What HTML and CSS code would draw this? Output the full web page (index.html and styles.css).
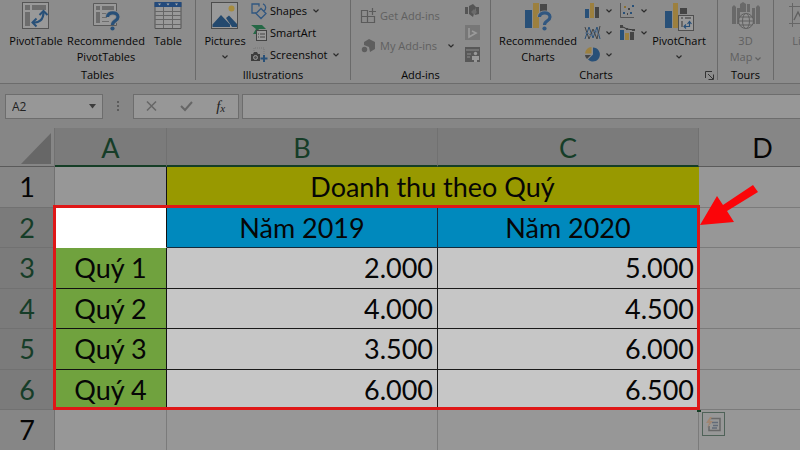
FILE: index.html
```html
<!DOCTYPE html>
<html lang="vi">
<head>
<meta charset="utf-8">
<title>Doanh thu theo Quý</title>
<link rel="stylesheet" href="styles.css">
</head>
<body>
<svg class="defs" aria-hidden="true">
  <symbol id="chev" viewBox="0 0 6 4"><path d="M.5.5 3 3 5.5.5" fill="none" stroke="currentColor" stroke-width="1.2"/></symbol>
</svg>
<header class="ribbon">
  <section class="group tables">
    <div class="tools">
      <button class="big"><svg width="28" height="27" viewBox="0 0 28 27"><rect x=".5" y=".5" width="26" height="26" fill="#999" stroke="#555"/><path d="M3 3h5v5H3zM10 3h14v5H10zM3 10h5v14H3z" fill="#6d6d6d"/><path d="M11 20.500C17 21 21.500 18 21.500 10" fill="none" stroke="#285078" stroke-width="2.200"/><path d="M17.500 13l4-4 4 4M14.500 16.500l-4 4 4 4" fill="none" stroke="#285078" stroke-width="2"/></svg><span>PivotTable</span></button>
      <button class="big"><svg width="28" height="27" viewBox="0 0 28 27"><path d="M1.500 1.500h23v22h-23z" fill="#999" stroke="#5a5a5a"/><path d="M4 4h4v4H4zM10 4h12v4H10zM4 10h4v11H4zM10 11h5v1h-5zM10 15h5v1h-5zM10 19h7v1h-7z" fill="#6d6d6d"/><path d="M15.500 15c0-5.500 10.500-5.500 10.500 0 0 4-5.500 3.500-5.500 8" fill="none" stroke="#8d8d8d" stroke-width="5"/><path d="M15.500 15c0-5.500 10.500-5.500 10.500 0 0 4-5.500 3.500-5.500 8" fill="none" stroke="#285078" stroke-width="3.200"/><circle cx="20.500" cy="26.500" r="2.100" fill="#285078"/></svg><span>Recommended<br>PivotTables</span></button>
      <button class="big"><svg width="28" height="27" viewBox="0 0 28 27"><path d="M1 .5h26v26H1z" fill="#999" stroke="#555"/><path d="M.5 0h27v5H.5z" fill="#234a7c"/><path d="M4 1.500h3L5.500 3.500zM12.500 1.500h3L14 3.500zM21 1.500h3l-1.500 2z" fill="#aaa"/><path d="M9.500 5v21M18.500 5v21M1 9.500h26M1 13.500h26M1 17.500h26M1 22.500h26" stroke="#666" fill="none"/></svg><span>Table</span></button>
    </div>
    <h2>Tables</h2>
  </section>
  <section class="group illus">
    <div class="tools">
      <button class="big"><svg width="28" height="27" viewBox="0 0 28 27"><rect x=".5" y=".5" width="26" height="26" fill="#999" stroke="#4c4c4c"/><circle cx="20.500" cy="6.500" r="3" fill="#a78c3c"/><path d="M1.500 22.500 10 13l9 9.500V25H1.500zM15 16l3-2.500 8 8.500v3h-5z" fill="#24496e"/></svg><span>Pictures</span><svg class="chev"><use href="#chev"/></svg></button>
      <div class="stack">
        <button class="row"><svg width="16" height="16" viewBox="0 0 16 16"><path d="M8 3.500V1h-7v9h4M12 .8a4 4 0 0 1 1 7M5 10.500l5-5 5 5-5 5z" fill="none" stroke="#315780" stroke-width="1.300"/></svg>Shapes<svg class="chev"><use href="#chev"/></svg></button>
        <button class="row"><svg width="16" height="16" viewBox="0 0 16 16"><path d="M0 0h11l4 4H8L5 9H2l3-5z" fill="#256846"/><rect x="5.500" y="5.500" width="10" height="10" fill="#999" stroke="#444"/><path d="M7 9h1M9 9h5M7 12h1M9 12h5" stroke="#444"/></svg>SmartArt</button>
        <button class="row"><svg width="16" height="16" viewBox="0 0 16 16"><path d="M3 4V1h10v7" fill="none" stroke="#777" stroke-dasharray="1 1"/><path d="M0 7h2l1-2h3l1 2h2v7H0z" fill="#3d3d3d"/><circle cx="4.500" cy="10.500" r="2" fill="#555" stroke="#999"/><path d="M13 8v7M9.500 11.500h7" stroke="#285078" stroke-width="2"/></svg>Screenshot<svg class="chev"><use href="#chev"/></svg></button>
      </div>
    </div>
    <h2>Illustrations</h2>
  </section>
  <section class="group addins">
    <div class="tools">
      <div class="pair">
        <button class="row" disabled><svg width="16" height="16" viewBox="0 0 16 16"><path d="M.5 2.500h6v6h-6zM.5 8.500h6v6h-6zM6.500 8.500h7v6h-7zM11.500 0v7M8 3.500h7" fill="none" stroke="#5b5b5b" stroke-width="1.200"/></svg>Get Add-ins</button>
        <button class="row" disabled><svg width="16" height="16" viewBox="0 0 16 16"><path d="M3 4 8 1l6 3v7l-5 3-1-5-5-2z" fill="#5e5e5e"/><circle cx="3.500" cy="11.500" r="2.700" fill="#5e5e5e"/></svg>My Add-ins<svg class="chev dark"><use href="#chev"/></svg></button>
      </div>
      <div class="stack">
        <button class="mini" disabled aria-label="Visio"><svg width="16" height="16" viewBox="0 0 16 16"><path d="M0 4h3v7H0zM4 3l4-2 3 3-3 10-4-3zM11 4h3v7l-4 1z" fill="#555"/><path d="M9 6l3 3-3 3-3-3z" fill="#6b6b6b"/></svg></button>
        <button class="mini" disabled aria-label="Bing"><svg width="16" height="16" viewBox="0 0 16 16"><path d="M0 0h15v15H0z" fill="#777"/><path d="M4 3v9l7-4-4-2" fill="none" stroke="#9b9b9b" stroke-width="1.600"/></svg></button>
        <button class="mini" disabled aria-label="People Graph"><svg width="16" height="16" viewBox="0 0 16 16"><path d="M0 0h15v15H0z" fill="#585858"/><path d="M1 3h13M2 7h4M2 10h3" stroke="#8c8c8c"/><circle cx="10.500" cy="6.500" r="1.700" fill="#999"/><path d="M7 9h7v4h-2v2H9v-2H7z" fill="#999"/></svg></button>
      </div>
    </div>
    <h2>Add-ins</h2>
  </section>
  <section class="group charts">
    <div class="tools">
      <button class="big"><svg width="28" height="27" viewBox="0 0 28 27"><path d="M1 8h7v18H1z" fill="#285078"/><path d="M9 1h6v25H9z" fill="#9c803f"/><path d="M16 2h7v8h-7z" fill="#494949"/><path d="M15.500 15c0-5.500 10.500-5.500 10.500 0 0 4-5.500 3.500-5.500 8" fill="none" stroke="#8d8d8d" stroke-width="5"/><path d="M15.500 15c0-5.500 10.500-5.500 10.500 0 0 4-5.500 3.500-5.500 8" fill="none" stroke="#315780" stroke-width="3.200"/><circle cx="20.500" cy="26.500" r="2.100" fill="#315780"/></svg><span>Recommended<br>Charts</span></button>
      <div class="kinds">
        <button class="mini" aria-label="Column chart"><svg width="16" height="16" viewBox="0 0 16 16"><path d="M0 6h4v9H0z" fill="#285078"/><path d="M5 0h4v15H5z" fill="#9c803f"/><path d="M10 4h4v11h-4z" fill="#444"/></svg><svg class="chev"><use href="#chev"/></svg></button>
        <button class="mini" aria-label="Scatter chart"><svg width="16" height="16" viewBox="0 0 16 16"><path d="M.5 0v14.500H14" fill="none" stroke="#555"/><path d="M3 9h2v2H3zM10 9h2v2h-2zM12 2h2v2h-2z" fill="#285078"/><path d="M4 3h2v2H4z" fill="#8c7030"/><path d="M8 5h2v2H8zM7 10h1v2H7z" fill="#444"/></svg><svg class="chev"><use href="#chev"/></svg></button>
        <button class="mini" aria-label="Line chart"><svg width="16" height="16" viewBox="0 0 16 16"><path d="M0 14 4 2l4 11 4-11 3 12" fill="none" stroke="#285078"/><path d="M0 2l4 12 4-10 4 10 3-13" fill="none" stroke="#444"/><path d="M0 8h3l3 3 4-6 5 6" fill="none" stroke="#557090"/></svg><svg class="chev"><use href="#chev"/></svg></button>
        <button class="mini" aria-label="Combo chart"><svg width="16" height="16" viewBox="0 0 16 16"><path d="M0 5h4v10H0z" fill="#285078"/><path d="M5 8h4v7H5z" fill="#9c803f"/><path d="M10 7h4v8h-4z" fill="#444"/><path d="M1 1l6 3 7 1" fill="none" stroke="#333"/><path d="M0 0h3v3H0zM6 3h2v2H6zM12 4h3v2h-3z" fill="#444"/></svg><svg class="chev"><use href="#chev"/></svg></button>
        <button class="mini" aria-label="Pie chart"><svg width="16" height="16" viewBox="0 0 16 16"><path d="M8 7.500V.5a7 7 0 1 1-5 12z" fill="#285078"/><path d="M6.500 6.500V0A7 7 0 0 0 0 6.500z" fill="#9c803f"/><path d="M0 8h6l-4 4Q0 10 0 8z" fill="#444"/></svg><svg class="chev"><use href="#chev"/></svg></button>
      </div>
      <button class="big"><svg width="30" height="27" viewBox="0 0 30 27"><path d="M1 9h7v17H1z" fill="#285078"/><path d="M9 1h5v25H9z" fill="#9c803f"/><path d="M16 6h7v6h-7z" fill="#444"/><rect x="14.500" y="13.500" width="15" height="15" fill="#999" stroke="#4f4f4f"/><path d="M17 15h2v2h-2zM21 15h6v2h-6zM17 19h2v6h-2z" fill="#666"/><path d="M20.500 24.500h5v-4M23.500 22l2-2.500 2 2.500M22 22.500l-2 2 2 2" fill="none" stroke="#285078" stroke-width="1.200"/></svg><span>PivotChart</span><svg class="chev"><use href="#chev"/></svg></button>
    </div>
    <h2>Charts</h2>
    <button class="launch" aria-label="Charts options"><svg width="9" height="9" viewBox="0 0 9 9"><path d="M.5 7V.5H7M3 3l5 5M8.500 3.500v5h-5" fill="none" stroke="#333"/></svg></button>
  </section>
  <section class="group tours">
    <div class="tools">
      <button class="big" disabled><svg width="28" height="27" viewBox="0 0 28 27"><path d="M0 5 2 3l2 2v17H0zM5 6h3v16H5zM8 2l3-2 3 2v8H8zM15 2h3v8h-3zM20 6h3v16h-3zM24 5l2-2 2 2v17h-4z" fill="#696969"/><g fill="#929292" stroke="#606060"><circle cx="14" cy="19" r="7.500"/><ellipse cx="14" cy="19" rx="3.500" ry="7.500"/><path d="M6.500 19h15M8 15h12M8 23h12" fill="none"/></g></svg><span>3D<br>Map <svg class="chev"><use href="#chev"/></svg></span></button>
    </div>
    <h2>Tours</h2>
  </section>
  <section class="group spark">
    <div class="tools">
      <button class="big" disabled><svg width="28" height="27" viewBox="0 0 28 27"><path d="M0 4.500h28M0 21.500h28M3.500 1v24M24.500 1v24" stroke="#666"/><path d="M5 18l4-8 3 6 3-8 4 9 4-8" fill="none" stroke="#606060" stroke-width="1.400"/></svg><span>Line</span></button>
    </div>
  </section>
</header>

<div class="formula-bar">
  <div class="field name-box">
    <input type="text" value="A2" aria-label="Name box">
    <button aria-label="Open name list"><svg width="7" height="5" viewBox="0 0 7 5"><path d="M0 0h7L3.500 4.500z" fill="#3c3c3c"/></svg></button>
  </div>
  <svg class="grip" width="3" height="12" viewBox="0 0 3 12"><path d="M0 1h2v2H0zM0 5h2v2H0zM0 9h2v2H0z" fill="#5c5c5c"/></svg>
  <div class="field actions">
    <button aria-label="Cancel"><svg width="11" height="10" viewBox="0 0 11 10"><path d="M1 .5l9 9M10 .5l-9 9" stroke="#666" stroke-width="1.500"/></svg></button>
    <button aria-label="Enter"><svg width="13" height="10" viewBox="0 0 13 10"><path d="M1 5l4 4 7-8" fill="none" stroke="#666" stroke-width="2"/></svg></button>
    <button class="fx" aria-label="Insert function">f<small>x</small></button>
  </div>
  <input class="field content" type="text" aria-label="Formula">
</div>

<main class="sheet">
  <table>
    <colgroup><col class="c-num"><col class="c-a"><col class="c-b"><col class="c-c"><col class="c-d"></colgroup>
    <thead>
      <tr><th class="corner"><svg width="30" height="31" viewBox="0 0 30 31"><path d="M30 0v31H0z" fill="#676767"/></svg></th><th class="on">A</th><th class="on">B</th><th class="on">C</th><th>D</th></tr>
    </thead>
    <tbody>
      <tr><th>1</th><td class="edge"></td><td class="title" colspan="2">Doanh thu theo Quý</td><td></td></tr>
      <tr class="even"><th class="on">2</th><td class="active"></td><td class="year">Năm 2019</td><td class="year">Năm 2020</td><td></td></tr>
      <tr><th class="on">3</th><td class="quarter">Quý 1</td><td class="num">2.000</td><td class="num">5.000</td><td></td></tr>
      <tr class="even"><th class="on">4</th><td class="quarter">Quý 2</td><td class="num">4.000</td><td class="num">4.500</td><td></td></tr>
      <tr><th class="on">5</th><td class="quarter">Quý 3</td><td class="num">3.500</td><td class="num">6.000</td><td></td></tr>
      <tr class="even"><th class="on">6</th><td class="quarter">Quý 4</td><td class="num">6.000</td><td class="num">6.500</td><td></td></tr>
      <tr><th>7</th><td></td><td></td><td></td><td></td></tr>
    </tbody>
  </table>
  <div class="selection"></div>
  <svg class="arrow" width="58" height="41" viewBox="0 0 58 41"><path d="M0 40 17 11l6 9L53 0l5 7-31 19 7 11z" fill="#fb0509"/></svg>
  <button class="quick" aria-label="Quick analysis"><svg width="18" height="18" viewBox="0 0 18 18"><path d="M6 3.500h9v12H4V11" fill="none" stroke="#686868" stroke-width="1.500"/><path d="M7 7.500h6M8 10.500h5M7 13h5" stroke="#626b78" stroke-width="1.500"/><path d="M5 2 1 8h3l-2 5 6-7H5l2-4z" fill="#a08672"/></svg></button>
</main>
</body>
</html>
```
FILE: styles.css
```css
* { box-sizing: border-box; }
body {
  margin: 0;
  height: 100vh;
  overflow: hidden;
  background: #868686;
  color: #060606;
  font-family: "Open Sans", sans-serif;
  font-size: 12px;
}
button, input {
  margin: 0;
  padding: 0;
  border: 0;
  background: none;
  color: inherit;
  font: inherit;
}
svg { display: block; flex: none; overflow: visible; }
.defs { position: absolute; width: 0; height: 0; }
.chev { width: 6px; height: 4px; color: #2c2c2c; }

/* Ribbon */
.ribbon {
  display: flex;
  height: 84px;
  background: #8c8c8c;
  border-bottom: 1px solid #6c6c6c;
  overflow: hidden;
}
.group {
  position: relative;
  flex: none;
  display: flex;
  flex-direction: column;
  height: 80px;
}
.group + .group { border-left: 1px solid #6a6a6a; }
.tools { display: flex; flex: none; height: 67px; }
.group h2 {
  margin: 0;
  font-size: 11px;
  font-weight: 400;
  line-height: 16px;
  text-align: center;
}
.tables { width: 195px; }
.illus { width: 155px; }
.addins { width: 140px; }
.charts { width: 227px; }
.charts h2 { padding-right: 16px; }
.tours { width: 56px; }
.spark { width: 60px; }

.big {
  display: flex;
  flex-direction: column;
  align-items: center;
  gap: 4px;
  padding-top: 2px;
  font-size: 11px;
  line-height: 16px;
  white-space: nowrap;
}
.big > .chev { margin-top: 2px; }
.big span .chev { display: inline-block; }
.tables .tools { display: grid; grid-template-columns: 66px 74px 50px; padding-left: 3px; }
.illus .big, .spark .big { width: 58px; }
.tours .big { width: 55px; }
.charts .big { width: 94px; }
.charts .big:last-child { width: 74px; }
.big, .row, .mini { justify-content: flex-start; }
.big:disabled { color: #606060; }
.big:disabled .chev { color: #606060; }

.stack, .pair { display: flex; flex-direction: column; }
.stack { padding-left: 1px; margin-left: -4px; }
.row {
  display: flex;
  align-items: center;
  gap: 3px;
  height: 22px;
  font-size: 11px;
  line-height: 16px;
  white-space: nowrap;
}
.row .chev { margin-left: 3px; }
.row:disabled { color: #606060; }
.pair { width: 113px; padding: 5px 0 0 10px; gap: 8px; }
.pair .row .chev { margin-left: 8px; }
.addins .stack { margin: 0; }
.mini { display: flex; align-items: center; gap: 5px; height: 22px; }
.kinds {
  display: grid;
  grid-template-columns: 35px 28px;
  grid-auto-rows: 22px;
}
.kinds + .big { margin-left: -6px; }
.launch { position: absolute; right: 3px; bottom: 0; }

/* Formula bar */
.formula-bar { display: flex; align-items: center; height: 44px; padding-left: 5px; }
.field { height: 25px; border: 1px solid #6d6d6d; background: #979797; }
.name-box { display: flex; align-items: center; width: 98px; padding: 0 6px; color: #222; }
.name-box input { flex: 1; min-width: 0; font-size: 12px; }
.grip { margin: 0 13px 0 14px; }
.actions { display: flex; width: 106px; }
.actions button { flex: 1; display: flex; align-items: center; justify-content: center; }
.actions .fx { color: #222; font: italic 15px "Liberation Serif", serif; }
.fx small { font-size: 11px; padding-top: 3px; }
.content { flex: 1; min-width: 0; margin-left: 3px; border-right: 0; }

/* Sheet */
.sheet { position: relative; overflow: hidden; font-family: Lato, sans-serif; font-size: 27px; line-height: 32px; }
table { width: 827px; border-collapse: separate; border-spacing: 0; table-layout: fixed; }
.c-num { width: 55px; }
.c-a { width: 112px; }
.c-b { width: 271px; }
.c-c { width: 261px; }
th, td { height: 41px; padding: 0; border: 0 solid #7b7b7b; border-width: 0 1px 1px 0; background: #979797; text-align: center; }
.even > * { height: 40px; }
th { background: #868686; border-color: #717171; font-weight: 400; }
thead th { height: 39px; padding-top: 2px; border-bottom-color: #5a5a5a; }
th.on { background: #7b7b7b; color: #163d28; }
thead th.on { border-bottom: 2px solid #153e26; }
.corner svg { margin: 0 3px 0 auto; }
td.title { background: #989900; border-right-color: #989900; }
td.edge, td.active, td.quarter { border-right-color: #111; }
td.active { background: #fff; border-bottom-color: #fff; }
td.year { background: #0089bd; border-color: #142b3b; }
td.quarter { background: #70a23e; border-color: #111; }
td.num { padding-right: 4px; background: #c6c6c6; border-color: #1a1a1a; text-align: right; }
.selection { position: absolute; left: 53px; top: 77px; width: 647px; height: 205px; border: 3px solid #df1717; }
.selection::after {
  content: "";
  position: absolute;
  right: -4px;
  bottom: -5px;
  width: 4px;
  height: 2px;
  background: #153e26;
}
.arrow { position: absolute; left: 700px; top: 57px; }
.quick {
  position: absolute;
  left: 702px;
  top: 284px;
  display: grid;
  place-content: center;
  width: 23px;
  height: 24px;
  border: 1px solid #4f6258;
  background: #979797;
}
```
